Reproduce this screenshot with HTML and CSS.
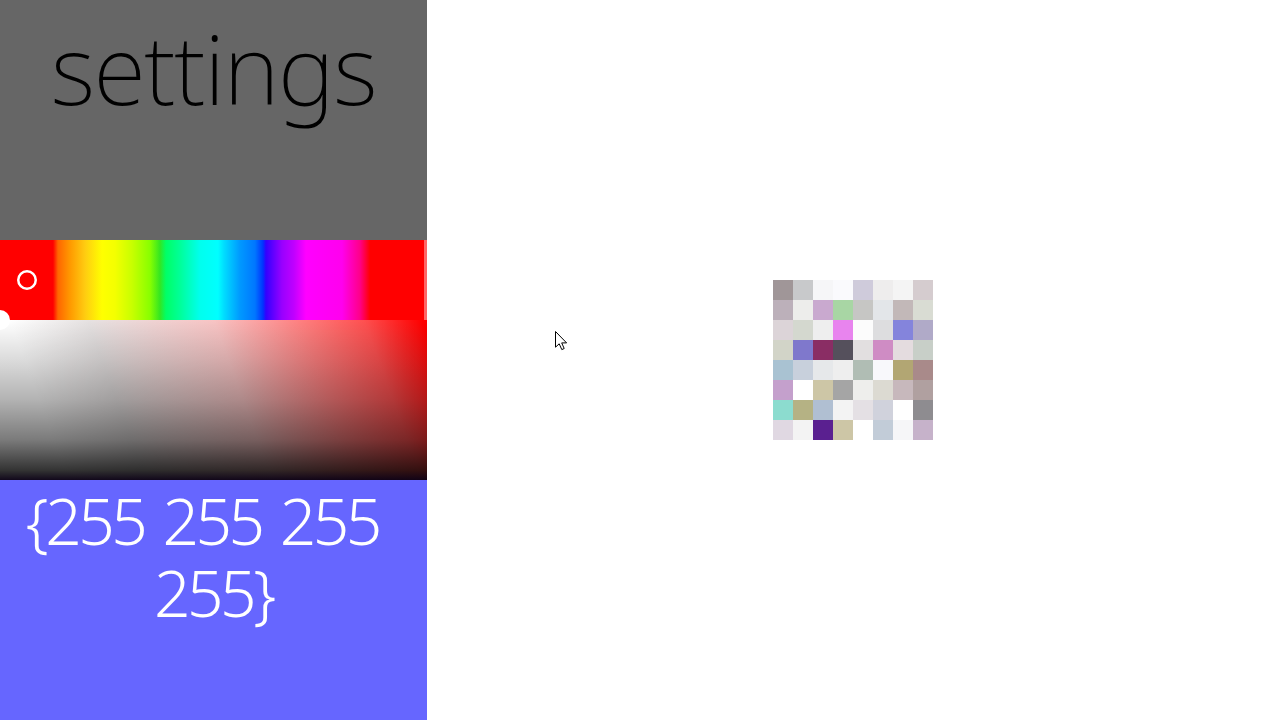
FILE: index.html
```html
<!DOCTYPE html>
<html lang="en">
<head>
<meta charset="utf-8">
<title>settings</title>
<link rel="stylesheet" href="styles.css">
</head>
<body>
<div class="app">
  <aside class="panel">
    <header class="title-band"><h1 class="title">settings</h1></header>
    <div class="hue-band">
      <svg class="hue-ring" width="20" height="20" viewBox="0 0 20 20"><circle cx="10" cy="10" r="8.75" fill="none" stroke="#fff" stroke-width="2.5"/></svg>
      <span class="hue-edge"></span>
    </div>
    <div class="sv-band"><span class="sv-knob"></span></div>
    <div class="value-band"><p class="value">{255 255 255 255}</p></div>
  </aside>
  <main class="stage">
    <div class="grid">
      <i style="background:#a09698"></i><i style="background:#c8c9cb"></i><i style="background:#f6f6f8"></i><i style="background:#fafafd"></i><i style="background:#cfcbdb"></i><i style="background:#eeeded"></i><i style="background:#f4f4f4"></i><i style="background:#d5cccf"></i>
      <i style="background:#bcb0ba"></i><i style="background:#ededeb"></i><i style="background:#c9a9cf"></i><i style="background:#a8d6a4"></i><i style="background:#c6c6c4"></i><i style="background:#e3e6e9"></i><i style="background:#c2b8b8"></i><i style="background:#d9dcd3"></i>
      <i style="background:#dcd4d8"></i><i style="background:#d4d8cf"></i><i style="background:#eeeeee"></i><i style="background:#e884ee"></i><i style="background:#fcfcfc"></i><i style="background:#dddddf"></i><i style="background:#8484dc"></i><i style="background:#b0aac8"></i>
      <i style="background:#d2d4c8"></i><i style="background:#7f78cc"></i><i style="background:#8a2d64"></i><i style="background:#55505c"></i><i style="background:#e2dfe0"></i><i style="background:#cf8cc4"></i><i style="background:#e4dcdf"></i><i style="background:#c8cfc8"></i>
      <i style="background:#a9c2d2"></i><i style="background:#c8d0dc"></i><i style="background:#e6e8ea"></i><i style="background:#eeeeee"></i><i style="background:#b0bdb4"></i><i style="background:#f8f8fb"></i><i style="background:#b2a673"></i><i style="background:#a98a8a"></i>
      <i style="background:#c4a0cc"></i><i style="background:#ffffff"></i><i style="background:#cdc6a6"></i><i style="background:#a5a5a5"></i><i style="background:#eeeeec"></i><i style="background:#dcdad2"></i><i style="background:#c7b8bc"></i><i style="background:#b0a0a0"></i>
      <i style="background:#8cdccf"></i><i style="background:#b5b284"></i><i style="background:#b0bfd2"></i><i style="background:#f3f3f3"></i><i style="background:#e4e0e4"></i><i style="background:#d0d2dc"></i><i style="background:#ffffff"></i><i style="background:#8e8c90"></i>
      <i style="background:#e0d8e2"></i><i style="background:#f3f3f3"></i><i style="background:#5a2090"></i><i style="background:#cdc6a6"></i><i style="background:#ffffff"></i><i style="background:#c2ccd8"></i><i style="background:#f6f6f8"></i><i style="background:#c6b2ca"></i>
    </div>
    <svg class="cursor" width="13" height="20" viewBox="0 0 13 20"><path d="M.5.5V16.2L4.2 12.8 6.8 18.6 9.2 17.5 6.7 11.9H11.6Z" fill="#fff" stroke="#000" stroke-width="1"/></svg>
  </main>
</div>
</body>
</html>
```
FILE: styles.css
```css
* { box-sizing: border-box; }
html, body { margin: 0; height: 100%; overflow: hidden; background: #fff; }
.app { display: flex; width: 1280px; height: 720px; }
.panel { flex: 0 0 33.3333%; display: flex; flex-direction: column; }
.title-band { flex: 0 0 240px; background: #666; display: flex; justify-content: center; }
.title { margin: 0; font: 200 96px/136px "Noto Sans", sans-serif; letter-spacing: -1.5px; color: #000; }
.hue-band {
  flex: 0 0 80px; position: relative;
  background: linear-gradient(to right,
    #f00 53px, #ff6600 58px, #ff9900 70px, #ffcc11 85px, #ffff00 102px, #f4ff00 115px,
    #c8ff00 132px, #88ff00 150px, #33e622 160px, #00ff66 166px, #00ff99 180px,
    #00ffee 200px, #00ffff 218px, #00ddff 224px, #0099ff 240px, #0077ff 255px,
    #0033ff 263px, #3300ff 266px, #9900ff 282px, #c000ff 294px, #ff00ff 306px,
    #ff00ee 342px, #ff0088 360px, #f00 370px);
}
.hue-ring { position: absolute; left: 17px; top: 30px; }
.hue-edge { position: absolute; right: 0; top: 0; width: 3px; height: 100%; background: #ff6666; }
.sv-band {
  flex: 0 0 160px; position: relative;
  background:
    linear-gradient(to bottom, rgba(0,0,0,0), rgba(0,0,0,.14) 25%, rgba(0,0,0,.3) 50%, rgba(0,0,0,.52) 75%, rgba(0,0,0,.8) 94%, rgba(10,0,20,.97)),
    linear-gradient(70deg, #fff 14%, #e6e2e2 30%, #f8c4c4 56%, #ff7f7f 74%, #ff5050 87%, #f00 99%);
}
.sv-knob {
  position: absolute; left: -10px; top: -10px; width: 20px; height: 20px;
  border-radius: 50%; background: #fff;
}
.value-band { flex: 0 0 240px; background: #6666ff; }
.value { margin: 0; padding: 5px 20px 0; text-align: center; text-indent: -22px; font: 300 64px/72px "Noto Sans", sans-serif; letter-spacing: -3.5px; word-spacing: 5px; color: #fff; }
.stage { flex: 1; position: relative; display: flex; align-items: center; justify-content: center; }
.grid { display: grid; grid-template-columns: repeat(8, 20px); grid-auto-rows: 20px; }
.grid i { display: block; }
.cursor { position: absolute; left: 128.33px; top: 331px; }
```
